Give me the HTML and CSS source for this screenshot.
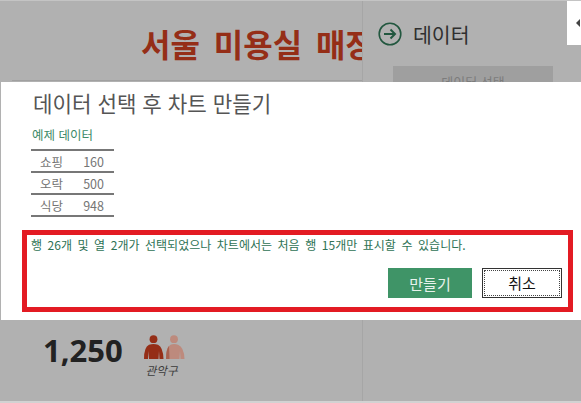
FILE: index.html
```html
<!DOCTYPE html>
<html lang="ko">
<head>
    <title>데이터 선택 후 차트 만들기</title>
    <link rel="stylesheet" href="styles.css">
</head>
<body>

    <div class="screen">
        <div class="panes">
            <div class="report">
                <div class="report-head">
                    <h1>서울 미용실 매장</h1>
                </div>
                <div class="stat">
                    <span class="stat-value">1,250</span>
                    <div class="stat-side">
                        <svg class="people" width="42" height="25" viewBox="0 0 42 25">
                            <circle cx="30" cy="4.2" r="3.9" fill="#bd8a7d"/>
                            <path fill="#bd8a7d" d="M22 24 Q22 12 26.5 9.8 Q30 8.4 34 9.8 Q40 12 40.5 24 L36.5 24 L36 16 L35.5 24 L26 24 Z"/>
                            <path fill="#a8614f" d="M22 24 Q22 14 25 11 L25.5 24 Z"/>
                            <circle cx="9.5" cy="4.2" r="3.9" fill="#952e17"/>
                            <path fill="#952e17" d="M0 24 Q0 12 5 9.8 Q9.5 8.4 14 9.8 Q19 12 19.5 24 L15.5 24 L15 16 L14.5 24 L5 24 L4.5 16 L4 24 Z"/>
                        </svg>
                        <span class="stat-label">관악구</span>
                    </div>
                </div>
            </div>
            <div class="side">
                <div class="side-title">
                    <svg width="24" height="24" viewBox="0 0 24 24" fill="none" stroke="#22573f">
                        <circle cx="12" cy="12" r="10.8" stroke-width="1.6"/>
                        <path d="M6 12 H17 M12.5 7.5 L17 12 L12.5 16.5" stroke-width="2"/>
                    </svg>
                    <span>데이터</span>
                </div>
                <button class="side-btn">데이터 선택</button>
            </div>
            <div class="tab"><span class="tab-arrow"></span></div>
        </div>
        <div class="bottom-edge"></div>

        <div class="dialog">
            <h2>데이터 선택 후 차트 만들기</h2>
            <div class="sample-title">예제 데이터</div>
            <table class="sample">
                <tr><td>쇼핑</td><td>160</td></tr>
                <tr><td>오락</td><td>500</td></tr>
                <tr><td>식당</td><td>948</td></tr>
            </table>
            <div class="notice">
                <p>행 26개 및 열 2개가 선택되었으나 차트에서는 처음 행 15개만 표시할 수 있습니다.</p>
                <div class="actions">
                    <button class="btn btn-primary">만들기</button>
                    <button class="btn btn-cancel"><span>취소</span></button>
                </div>
            </div>
        </div>
    </div>

</body>
</html>
```

FILE: styles.css
```css
html, body {
    margin: 0;
    padding: 0;
}
body {
    font-family: "Noto Sans CJK KR", "Noto Sans", sans-serif;
    overflow: hidden;
}
.screen {
    position: relative;
    width: 581px;
    height: 403px;
    display: flex;
    flex-direction: column;
    background-color: #b1b1b1;
    border-top: 1px solid #c4c4c4;
    box-sizing: border-box;
}
.panes {
    flex: 1;
    display: flex;
    min-height: 0;
}
.bottom-edge {
    height: 2px;
    background-color: #d2d2d2;
}
.report {
    width: 362px;
    display: flex;
    flex-direction: column;
    justify-content: space-between;
    border-right: 1px solid #a6a6a6;
    overflow: hidden;
}
.report-head {
    height: 80px;
    margin-left: 12px;
    padding-left: 129px;
    box-sizing: border-box;
    border-bottom: 1px solid #a0a0a0;
    white-space: nowrap;
}
.report-head h1 {
    margin: 0;
    padding-top: 19px;
    font-size: 32px;
    line-height: 46px;
    font-weight: 700;
    word-spacing: 5px;
    color: #952e17;
}
.stat {
    display: flex;
    gap: 21px;
    padding: 0 0 23px 43px;
}
.stat-value {
    font-family: "Open Sans", "Noto Sans", sans-serif;
    font-size: 31px;
    line-height: 50px;
    font-weight: 700;
    color: #222222;
}
.stat-side {
    display: flex;
    flex-direction: column;
    padding-top: 10px;
}
.people {
    display: block;
}
.stat-label {
    margin: 2px 0 0 2px;
    font-size: 11.5px;
    line-height: 16px;
    font-style: italic;
    color: #3c3c3c;
}
.side {
    width: 204px;
    padding: 21px 14px 0 15px;
    box-sizing: border-box;
}
.side-title {
    display: flex;
    align-items: center;
    gap: 11px;
    font-size: 20.5px;
    line-height: 24px;
    color: #2f2f2f;
}
.side-btn {
    display: block;
    width: 160px;
    height: 30px;
    margin: 20px 0 0 15px;
    padding: 0;
    border: 0;
    background-color: #9f9f9f;
    font-family: inherit;
    font-size: 13px;
    color: #7c7c7c;
}
.tab {
    width: 14px;
    height: 44px;
    display: flex;
    align-items: center;
    justify-content: flex-end;
    background-color: #ffffff;
}
.tab-arrow {
    margin-right: 1px;
    border-style: solid;
    border-width: 4px 4px 4px 0;
    border-color: transparent #444444 transparent transparent;
}
.dialog {
    position: absolute;
    top: 81px;
    left: 1px;
    right: 0;
    height: 238px;
    padding: 6px 8px 0 21px;
    box-sizing: border-box;
    background-color: #ffffff;
}
.dialog h2 {
    margin: 0 0 0 11px;
    font-size: 21.2px;
    line-height: 30px;
    font-weight: 400;
    color: #555555;
}
.sample-title {
    margin: 8px 0 0 10px;
    font-size: 12.5px;
    line-height: 18px;
    color: #3d8b68;
}
.sample {
    width: 83px;
    margin: 5px 0 0 9px;
    border-collapse: collapse;
    border-top: 2px solid #777777;
    font-size: 12.5px;
    color: #757575;
}
.sample td {
    height: 20px;
    padding: 0 0 0 3px;
    border-bottom: 2px solid #777777;
    text-align: center;
}
.sample td:last-child {
    padding: 0 10px 0 0;
    text-align: right;
}
.notice {
    height: 82px;
    margin-top: 13px;
    padding: 2px 6px 0 4px;
    box-sizing: border-box;
    border: 5px solid #e31b23;
}
.notice p {
    margin: 0;
    font-size: 12px;
    line-height: 16px;
    word-spacing: 2.2px;
    color: #2e7255;
}
.actions {
    display: flex;
    justify-content: flex-end;
    gap: 10px;
    margin-top: 15px;
}
.btn {
    width: 84px;
    height: 30px;
    padding: 0;
    border: 0;
    font-family: inherit;
    font-size: 15px;
}
.btn-primary {
    background-color: #3f9467;
    color: #e8f2ec;
}
.btn-cancel {
    width: 80px;
    padding: 1px;
    background-color: #ffffff;
    border: 1px solid #333333;
    color: #111111;
}
.btn-cancel span {
    display: block;
    height: 100%;
    line-height: 24px;
    box-sizing: border-box;
    border: 1px dotted #444444;
}
```
